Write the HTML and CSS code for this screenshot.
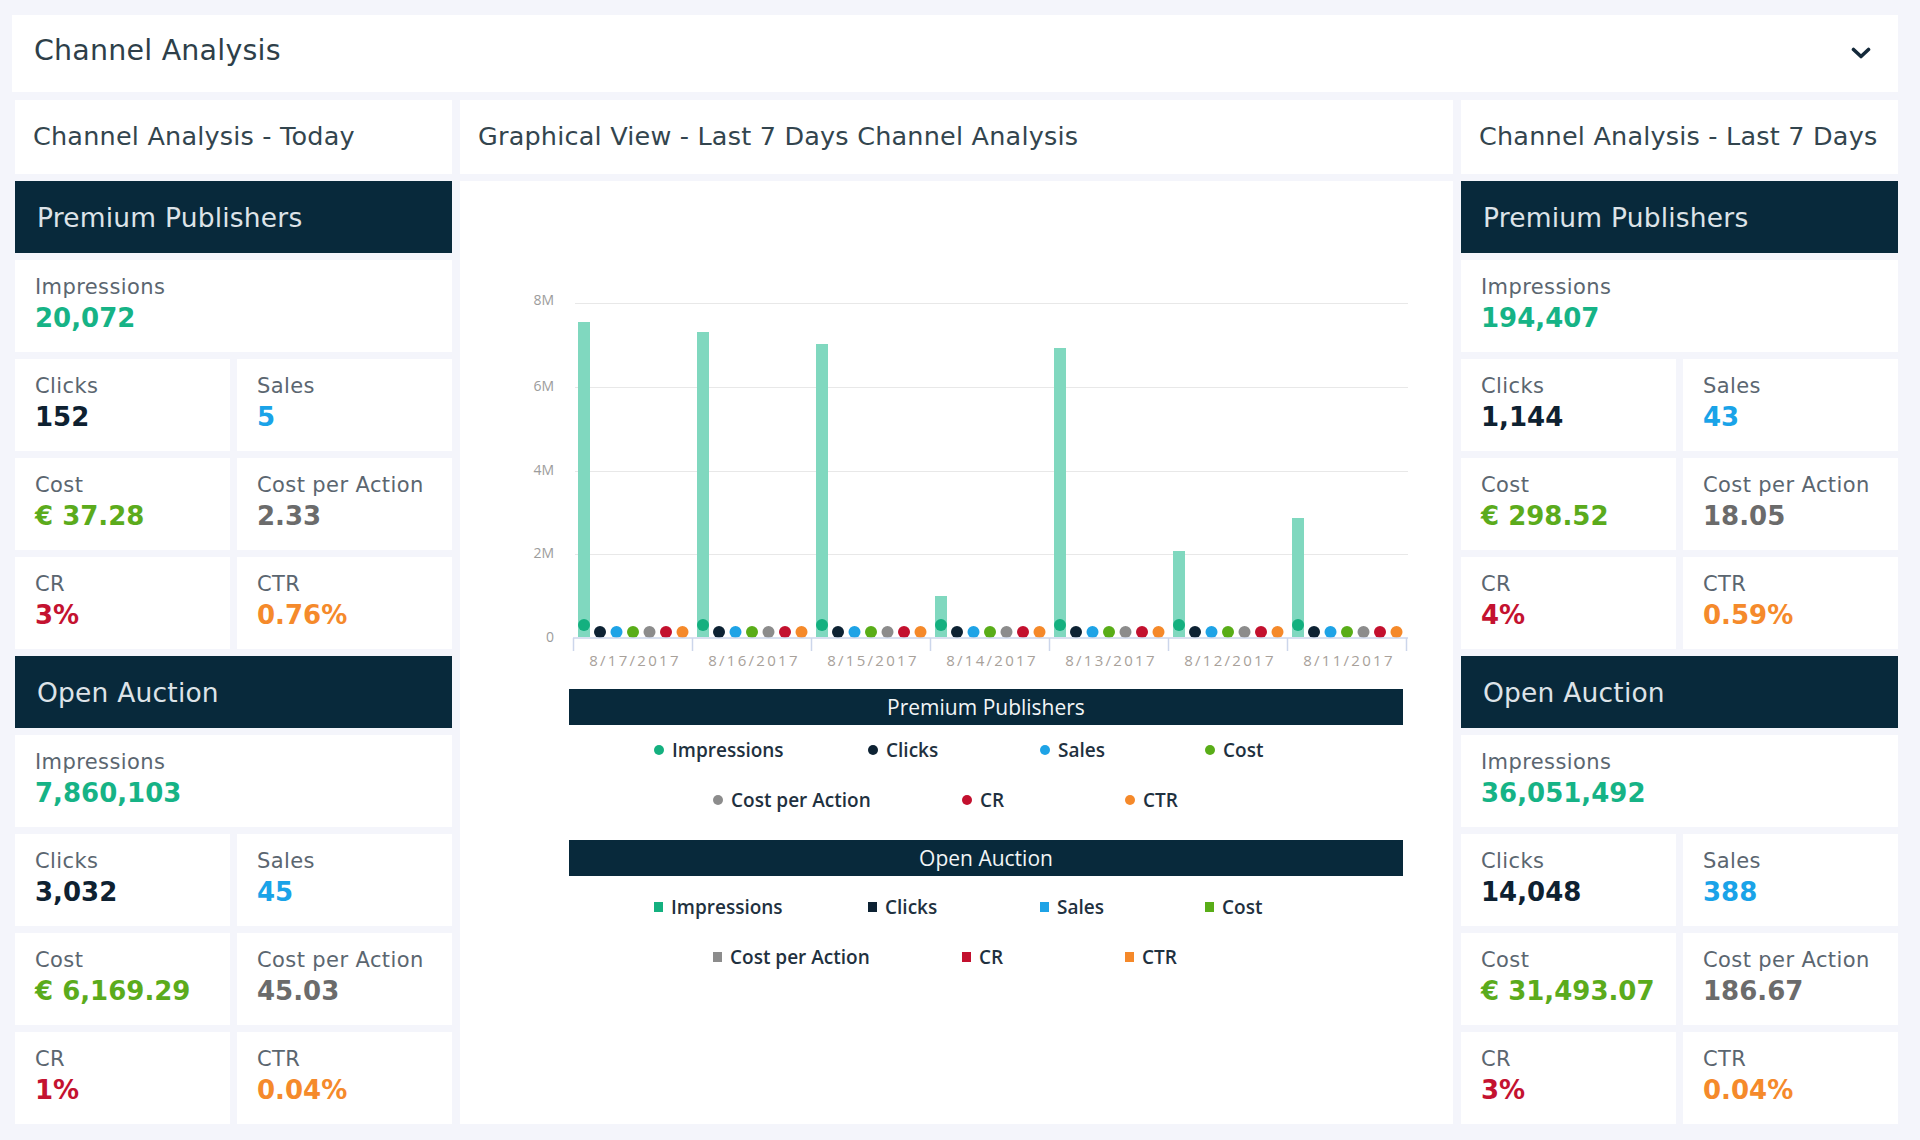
FILE: index.html
```html
<!DOCTYPE html>
<html lang="en">
<head>
<meta charset="utf-8">
<title>Channel Analysis</title>
<link rel="stylesheet" href="styles.css">
</head>
<body>
<div class="page">
  <header class="panel-head">
    <h1 class="panel-title">Channel Analysis</h1>
    <svg class="chevron" width="20" height="12" viewBox="0 0 20 12"><path d="M2.5 2.5 L10 9.5 L17.5 2.5" fill="none" stroke="#14293a" stroke-width="3.6" stroke-linecap="round" stroke-linejoin="round"/></svg>
  </header>

  <div class="columns">
    <section class="stats">
      <div class="col-title">Channel Analysis - Today</div>
      <div class="group-head">Premium Publishers</div>
      <div class="stat wide"><span class="lbl">Impressions</span><span class="val imp">20,072</span></div>
      <div class="stat"><span class="lbl">Clicks</span><span class="val clk">152</span></div>
      <div class="stat"><span class="lbl">Sales</span><span class="val sal">5</span></div>
      <div class="stat"><span class="lbl">Cost</span><span class="val cst">€ 37.28</span></div>
      <div class="stat"><span class="lbl">Cost per Action</span><span class="val cpa">2.33</span></div>
      <div class="stat"><span class="lbl">CR</span><span class="val cr">3%</span></div>
      <div class="stat"><span class="lbl">CTR</span><span class="val ctr">0.76%</span></div>
      <div class="group-head">Open Auction</div>
      <div class="stat wide"><span class="lbl">Impressions</span><span class="val imp">7,860,103</span></div>
      <div class="stat"><span class="lbl">Clicks</span><span class="val clk">3,032</span></div>
      <div class="stat"><span class="lbl">Sales</span><span class="val sal">45</span></div>
      <div class="stat"><span class="lbl">Cost</span><span class="val cst">€ 6,169.29</span></div>
      <div class="stat"><span class="lbl">Cost per Action</span><span class="val cpa">45.03</span></div>
      <div class="stat"><span class="lbl">CR</span><span class="val cr">1%</span></div>
      <div class="stat"><span class="lbl">CTR</span><span class="val ctr">0.04%</span></div>
    </section>

    <section class="middle">
      <div class="col-title">Graphical View - Last 7 Days Channel Analysis</div>
      <div class="chart-card">
        <svg class="chart" width="990" height="500" viewBox="0 0 990 500">
          <defs>
            <g id="cluster">
              <circle cx="11" cy="444" r="6" fill="#14b07f"/>
              <circle cx="27" cy="451" r="6" fill="#0d2233"/>
              <circle cx="43.5" cy="451" r="6" fill="#1ea3e6"/>
              <circle cx="60" cy="451" r="6" fill="#59ad18"/>
              <circle cx="76.5" cy="451" r="6" fill="#8c8c8c"/>
              <circle cx="93" cy="451" r="6" fill="#c3102e"/>
              <circle cx="109.5" cy="451" r="6" fill="#f5892a"/>
            </g>
          </defs>
          <g class="grid-lines" stroke="#e8e8e8" stroke-width="1">
            <line x1="115" y1="122.5" x2="948" y2="122.5"/>
            <line x1="115" y1="206.5" x2="948" y2="206.5"/>
            <line x1="115" y1="290.5" x2="948" y2="290.5"/>
            <line x1="115" y1="373.5" x2="948" y2="373.5"/>
          </g>
          <g class="y-labels" font-family="Open Sans, sans-serif" font-size="14" fill="#9c9c9c" text-anchor="end">
            <text x="94" y="124">8M</text>
            <text x="94" y="210">6M</text>
            <text x="94" y="294">4M</text>
            <text x="94" y="377">2M</text>
            <text x="94" y="461">0</text>
          </g>
          <g class="bars" fill="#80d8bf">
            <rect x="118" y="141" width="12" height="315"/>
            <rect x="237" y="151" width="12" height="305"/>
            <rect x="356" y="163" width="12" height="293"/>
            <rect x="475" y="415" width="12" height="41"/>
            <rect x="594" y="167" width="12" height="289"/>
            <rect x="713" y="370" width="12" height="86"/>
            <rect x="832" y="337" width="12" height="119"/>
          </g>
          <use href="#cluster" x="113"/>
          <use href="#cluster" x="232"/>
          <use href="#cluster" x="351"/>
          <use href="#cluster" x="470"/>
          <use href="#cluster" x="589"/>
          <use href="#cluster" x="708"/>
          <use href="#cluster" x="827"/>
          <g stroke="#ccd6eb" stroke-width="1.5">
            <line x1="113" y1="457" x2="948" y2="457"/>
            <line x1="113.5" y1="457" x2="113.5" y2="470"/>
            <line x1="232.5" y1="457" x2="232.5" y2="470"/>
            <line x1="351.5" y1="457" x2="351.5" y2="470"/>
            <line x1="470.5" y1="457" x2="470.5" y2="470"/>
            <line x1="589.5" y1="457" x2="589.5" y2="470"/>
            <line x1="708.5" y1="457" x2="708.5" y2="470"/>
            <line x1="827.5" y1="457" x2="827.5" y2="470"/>
            <line x1="946.5" y1="457" x2="946.5" y2="470"/>
          </g>
          <g class="x-labels" font-family="Open Sans, sans-serif" font-size="15" fill="#a8a19a" text-anchor="middle" letter-spacing="2.3">
            <text x="175" y="485">8/17/2017</text>
            <text x="294" y="485">8/16/2017</text>
            <text x="413" y="485">8/15/2017</text>
            <text x="532" y="485">8/14/2017</text>
            <text x="651" y="485">8/13/2017</text>
            <text x="770" y="485">8/12/2017</text>
            <text x="889" y="485">8/11/2017</text>
          </g>
        </svg>

        <div class="legend-group">
          <div class="legend-bar">Premium Publishers</div>
          <div class="legend-row row-a">
            <span class="item w-imp"><i class="mk c-imp"></i>Impressions</span>
            <span class="item w-clk"><i class="mk c-clk"></i>Clicks</span>
            <span class="item w-sal"><i class="mk c-sal"></i>Sales</span>
            <span class="item"><i class="mk c-cst"></i>Cost</span>
          </div>
          <div class="legend-row row-b">
            <span class="item w-cpa"><i class="mk c-cpa"></i>Cost per Action</span>
            <span class="item w-cr"><i class="mk c-cr"></i>CR</span>
            <span class="item"><i class="mk c-ctr"></i>CTR</span>
          </div>
        </div>

        <div class="legend-group second">
          <div class="legend-bar">Open Auction</div>
          <div class="legend-row row-a">
            <span class="item w-imp"><i class="mk sq c-imp"></i>Impressions</span>
            <span class="item w-clk"><i class="mk sq c-clk"></i>Clicks</span>
            <span class="item w-sal"><i class="mk sq c-sal"></i>Sales</span>
            <span class="item"><i class="mk sq c-cst"></i>Cost</span>
          </div>
          <div class="legend-row row-b">
            <span class="item w-cpa"><i class="mk sq c-cpa"></i>Cost per Action</span>
            <span class="item w-cr"><i class="mk sq c-cr"></i>CR</span>
            <span class="item"><i class="mk sq c-ctr"></i>CTR</span>
          </div>
        </div>
      </div>
    </section>

    <section class="stats">
      <div class="col-title">Channel Analysis - Last 7 Days</div>
      <div class="group-head">Premium Publishers</div>
      <div class="stat wide"><span class="lbl">Impressions</span><span class="val imp">194,407</span></div>
      <div class="stat"><span class="lbl">Clicks</span><span class="val clk">1,144</span></div>
      <div class="stat"><span class="lbl">Sales</span><span class="val sal">43</span></div>
      <div class="stat"><span class="lbl">Cost</span><span class="val cst">€ 298.52</span></div>
      <div class="stat"><span class="lbl">Cost per Action</span><span class="val cpa">18.05</span></div>
      <div class="stat"><span class="lbl">CR</span><span class="val cr">4%</span></div>
      <div class="stat"><span class="lbl">CTR</span><span class="val ctr">0.59%</span></div>
      <div class="group-head">Open Auction</div>
      <div class="stat wide"><span class="lbl">Impressions</span><span class="val imp">36,051,492</span></div>
      <div class="stat"><span class="lbl">Clicks</span><span class="val clk">14,048</span></div>
      <div class="stat"><span class="lbl">Sales</span><span class="val sal">388</span></div>
      <div class="stat"><span class="lbl">Cost</span><span class="val cst">€ 31,493.07</span></div>
      <div class="stat"><span class="lbl">Cost per Action</span><span class="val cpa">186.67</span></div>
      <div class="stat"><span class="lbl">CR</span><span class="val cr">3%</span></div>
      <div class="stat"><span class="lbl">CTR</span><span class="val ctr">0.04%</span></div>
    </section>
  </div>
</div>
</body>
</html>
```

FILE: styles.css
```css
html, body {
  margin: 0;
  padding: 0;
}

body {
  background: #f4f5fb;
  font-family: "DejaVu Sans", "Noto Sans", sans-serif;
  overflow: hidden;
}

.page {
  padding: 15px 22px 16px 15px;
}

.panel-head {
  height: 77px;
  box-sizing: border-box;
  background: #ffffff;
  display: flex;
  align-items: center;
  justify-content: space-between;
  padding: 0 27px 0 22px;
  margin-left: -3px;
}

.panel-title {
  margin: -6px 0 0 0;
  font-size: 28.5px;
  font-weight: 400;
  color: #2e3f49;
  letter-spacing: 0.2px;
}

.chevron {
  display: block;
  margin-top: -1px;
}

.columns {
  display: grid;
  grid-template-columns: 437px 1fr 437px;
  column-gap: 8px;
  margin-top: 8px;
}

.stats {
  display: grid;
  grid-template-columns: 1fr 1fr;
  gap: 7px;
  align-content: start;
}

.col-title {
  grid-column: 1 / -1;
  height: 74px;
  box-sizing: border-box;
  background: #ffffff;
  display: flex;
  align-items: center;
  padding: 0 0 2px 18px;
  font-size: 25.5px;
  letter-spacing: 0.2px;
  color: #33454e;
  white-space: nowrap;
}

.group-head {
  grid-column: 1 / -1;
  height: 72px;
  box-sizing: border-box;
  background: #08293b;
  color: #dde3e8;
  font-size: 26.5px;
  letter-spacing: 0.2px;
  display: flex;
  align-items: center;
  padding-left: 22px;
}

.stat {
  background: #ffffff;
  height: 92px;
  box-sizing: border-box;
  padding: 15px 0 0 20px;
}

.stat.wide {
  grid-column: 1 / -1;
}

.lbl {
  display: block;
  font-size: 21px;
  line-height: 24px;
  letter-spacing: 0.4px;
  color: #5b6670;
}

.val {
  display: block;
  margin-top: 3px;
  font-size: 26px;
  line-height: 32px;
  font-weight: 700;
  white-space: nowrap;
}

.imp { color: #16b386; }
.clk { color: #0e2131; }
.sal { color: #1aa3e8; }
.cst { color: #5bab1c; }
.cpa { color: #6b6b6b; }
.cr  { color: #c41230; }
.ctr { color: #f58a2b; }

.middle {
  display: flex;
  flex-direction: column;
  gap: 7px;
}

.chart-card {
  flex: 1;
  background: #ffffff;
}

.chart {
  display: block;
}

.legend-group {
  margin: 8px 0 0 109px;
  width: 834px;
  font-family: "Open Sans", "Noto Sans", sans-serif;
}

.legend-group.second {
  margin-top: 15px;
}

.legend-bar {
  height: 36px;
  background: #08293b;
  color: #f2f5f7;
  font-size: 21px;
  display: flex;
  align-items: center;
  justify-content: center;
}

.legend-group.second .legend-bar {
  margin-bottom: 6px;
}

.legend-row {
  height: 50px;
  display: flex;
  align-items: center;
}

.legend-row.row-a { padding-left: 85px; }
.legend-row.row-b { padding-left: 144px; }

.item {
  display: flex;
  align-items: center;
  font-size: 19px;
  font-weight: 600;
  color: #1f3140;
}

.w-imp { width: 214px; }
.w-clk { width: 172px; }
.w-sal { width: 165px; }
.w-cpa { width: 249px; }
.w-cr  { width: 163px; }

.mk {
  display: block;
  width: 10px;
  height: 10px;
  border-radius: 50%;
  margin-right: 8px;
}

.mk.sq {
  border-radius: 0;
  width: 9px;
  height: 10px;
}

.c-imp { background: #14b07f; }
.c-clk { background: #0d2233; }
.c-sal { background: #1ea3e6; }
.c-cst { background: #59ad18; }
.c-cpa { background: #8c8c8c; }
.c-cr  { background: #c3102e; }
.c-ctr { background: #f5892a; }
```
